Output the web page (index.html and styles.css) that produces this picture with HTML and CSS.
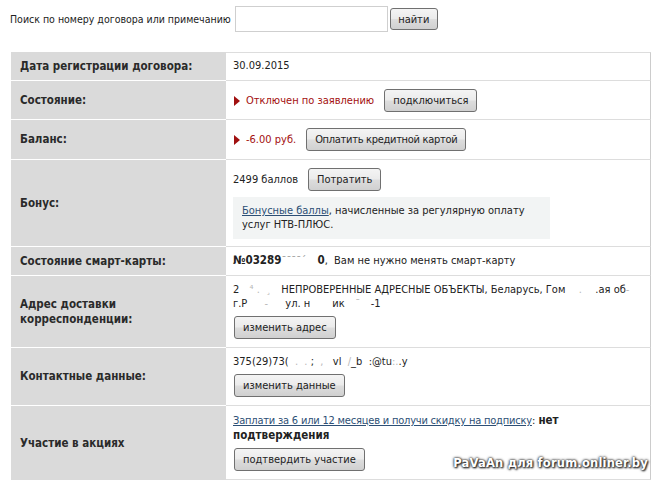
FILE: index.html
```html
<!DOCTYPE html>
<html lang="ru">
<head>
<meta charset="utf-8">
<title>Договор</title>
<link rel="stylesheet" href="styles.css">
</head>
<body>
<div class="page">
  <form class="search">
    <label class="search-label" for="q">Поиск по номеру договора или примечанию</label>
    <input class="search-input" id="q" type="text">
    <button class="btn btn-find" type="button">найти</button>
  </form>

  <div class="info">
    <div class="row row-line">
      <div class="label">Дата регистрации договора:</div>
      <div class="value">30.09.2015</div>
    </div>
    <div class="row row-btn">
      <div class="label">Состояние:</div>
      <div class="value inline">
        <span class="alert">Отключен по заявлению</span>
        <button class="btn" type="button">подключиться</button>
      </div>
    </div>
    <div class="row row-btn">
      <div class="label">Баланс:</div>
      <div class="value inline">
        <span class="alert">-6.00 руб.</span>
        <button class="btn btn-tight" type="button">Оплатить кредитной картой</button>
      </div>
    </div>
    <div class="row row-bonus">
      <div class="label">Бонус:</div>
      <div class="value">
        <div class="inline">
          <span>2499 баллов</span>
          <button class="btn" type="button">Потратить</button>
        </div>
        <div class="note"><a href="#">Бонусные баллы</a>, начисленные за регулярную оплату услуг НТВ-ПЛЮС.</div>
      </div>
    </div>
    <div class="row row-line">
      <div class="label">Состояние смарт-карты:</div>
      <div class="value"><b>№03289</b><span class="mask mask-card">ˉˉˉˉ´</span><b>0</b>,&nbsp; Вам не нужно менять смарт-карту</div>
    </div>
    <div class="row row-stack">
      <div class="label">Адрес доставки корреспонденции:</div>
      <div class="value">
        <div class="text">2<span class="mask gap gap-a">⁴ .&nbsp; ¸</span>НЕПРОВЕРЕННЫЕ АДРЕСНЫЕ ОБЪЕКТЫ, Беларусь, Гом<span class="mask gap gap-b">.</span>.ая об<span class="mask">-</span><br>г.Р<span class="mask gap gap-c">-</span>ул. н<span class="mask gap gap-d">&nbsp;</span>ик<span class="mask gap gap-e">ˉ</span>-1</div>
        <button class="btn" type="button">изменить адрес</button>
      </div>
    </div>
    <div class="row row-stack">
      <div class="label">Контактные данные:</div>
      <div class="value">
        <div class="text">375(29)73(<span class="mask">&nbsp; .&nbsp; .</span> ;<span class="mask">&nbsp; ,&nbsp;&nbsp;</span> vl<span class="mask">&nbsp; /</span>_b<span class="mask">&nbsp;&nbsp;</span>:@tu<span class="mask">:.</span>.y</div>
        <button class="btn" type="button">изменить данные</button>
      </div>
    </div>
    <div class="row row-stack row-last">
      <div class="label">Участие в акциях</div>
      <div class="value">
        <div class="text"><a class="promo" href="#">Заплати за 6 или 12 месяцев и получи скидку на подписку</a>: <b>нет подтверждения</b></div>
        <button class="btn" type="button">подтвердить участие</button>
      </div>
    </div>
    <div class="watermark">PaVaAn для forum.onliner.by</div>
  </div>
</div>
</body>
</html>
```

FILE: styles.css
```css
html, body {
  margin: 0;
  padding: 0;
  background: #fff;
}

body {
  font-family: "DejaVu Sans Condensed", "DejaVu Sans", Verdana, sans-serif;
  font-stretch: condensed;
  font-size: 11px;
  color: #222;
}

.page {
  padding: 6px 0 0 10px;
  width: 641px;
}

.search {
  display: flex;
  align-items: center;
  height: 26px;
  margin: 0;
}

.search-label {
  margin-right: 4px;
  font-size: 10.5px;
  color: #222;
}

.search-input {
  box-sizing: border-box;
  width: 153px;
  height: 26px;
  margin: 0 2px 0 0;
  border: 1px solid #cfcfcf;
  padding: 0 4px;
  font: inherit;
}

.btn {
  box-sizing: border-box;
  height: 23px;
  padding: 0 8px;
  margin: 0;
  border: 1px solid #707070;
  border-radius: 3px;
  background: linear-gradient(#f4f4f4 0%, #ebebeb 48%, #dddddd 52%, #d0d0d0 100%);
  font: inherit;
  font-size: 11px;
  color: #222;
  line-height: 21px;
  cursor: pointer;
}

.btn-tight {
  letter-spacing: -0.3px;
}

.btn-find {
  height: 22px;
  width: 48px;
  padding: 0;
}

.info {
  position: relative;
  margin: 20px 0 0 1px;
  width: 640px;
  display: flex;
  flex-direction: column;
}

.row {
  display: grid;
  grid-template-columns: 215px 1fr;
}

.label {
  display: flex;
  align-items: center;
  background: #dadada;
  border-top: 1px solid #fff;
  padding: 0 16px 0 9px;
  font-weight: bold;
  font-size: 11.5px;
  color: #2a2a2a;
  line-height: 15px;
}

.row:first-child .label {
  border-top-color: #dadada;
}

.value {
  border-top: 1px solid #dddddd;
  border-right: 1px solid #cccccc;
  padding: 7px 8px 8px 7px;
  line-height: 14px;
}

.value b {
  font-size: 11.5px;
}

.row-last .value {
  border-bottom: 1px solid #dddddd;
}

.row-line .value {
  padding: 6px 8px 7px 7px;
}

.row-btn .value {
  padding: 8px 8px 7px 7px;
}

.row-btn + .row-btn .value {
  padding: 8px 8px 8px 7px;
}

.row-stack .btn {
  margin-left: 1px;
}

.inline {
  display: flex;
  align-items: center;
  gap: 10px;
}

.alert {
  color: #a40f0f;
  display: inline-flex;
  align-items: center;
}

.alert::before {
  content: "";
  width: 0;
  height: 0;
  border-top: 5px solid transparent;
  border-bottom: 5px solid transparent;
  border-left: 6px solid #a01010;
  margin: 0 6px 0 1px;
}

.row-bonus .value {
  padding: 8px 8px 7px 7px;
}

.note {
  margin-top: 6px;
  width: 300px;
  background: #f2f4f4;
  padding: 7px 8px 7px 9px;
}

a {
  color: #2d4f75;
  text-decoration: underline;
}

.promo {
  letter-spacing: -0.2px;
}

.text {
  margin-bottom: 5px;
}

.mask {
  color: #b8b8b8;
}

.gap {
  display: inline-block;
  text-align: center;
}

.gap-a { width: 42px; }
.gap-b { width: 30px; }
.gap-c { width: 38px; }
.gap-d { width: 22px; }
.gap-e { width: 26px; }

.mask-card {
  display: inline-block;
  width: 36px;
  color: #999;
}

.watermark {
  position: absolute;
  right: 3px;
  bottom: 10px;
  font-family: "DejaVu Sans", Verdana, sans-serif;
  font-stretch: normal;
  font-weight: bold;
  font-size: 11.5px;
  letter-spacing: 0.2px;
  color: #fff;
  text-shadow: 0 0 2px #333, 0 0 3px #333, 1px 1px 2px #000;
}
```
